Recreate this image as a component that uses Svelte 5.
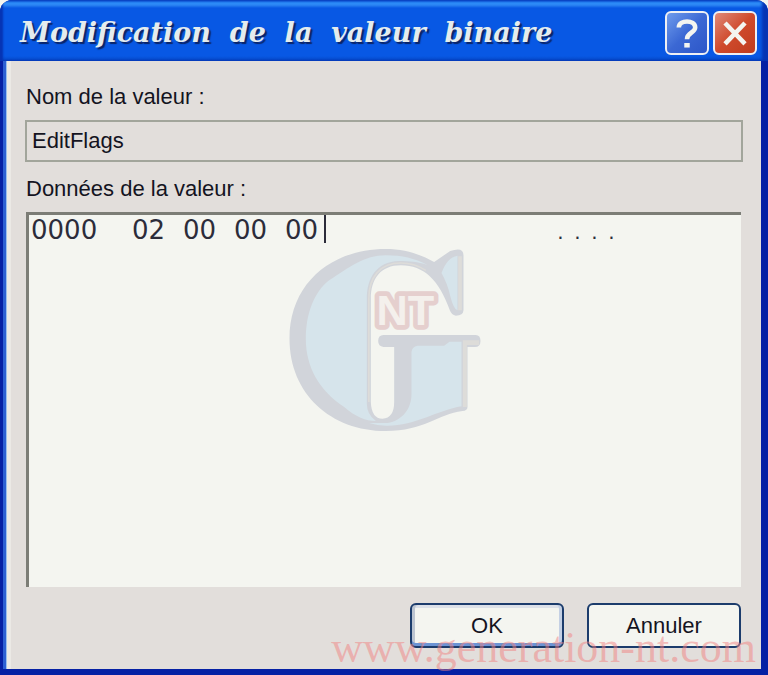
<script>
let name = 'EditFlags'
let offset = '0000'
let bytes = ['02', '00', '00', '00']

// caractères non imprimables affichés par un point
$: ascii = bytes.map(b => {
  const code = parseInt(b, 16)
  return code > 31 && code < 127 ? String.fromCharCode(code) : '.'
})
</script>

<div class="window">
  <header class="titlebar">
    <h1 class="title">Modification  de  la  valeur  binaire</h1>
    <button class="tool help" type="button" aria-label="Aide">
      <svg viewBox="0 0 44 44" width="40" height="40">
        <path d="M13 16 C13 7 31 7 31 16 C31 22 22 21 22 29" fill="none" stroke="#f4f5f0" stroke-width="5" />
        <rect x="19" y="33" width="6" height="5" fill="#f4f5f0" />
      </svg>
    </button>
    <button class="tool close" type="button" aria-label="Fermer">
      <svg viewBox="0 0 44 44" width="40" height="40">
        <path d="M11 11 L33 34 M33 11 L11 34" fill="none" stroke="#f4f5f0" stroke-width="5" />
      </svg>
    </button>
  </header>

  <form class="body" on:submit|preventDefault>
    <label class="label" for="value-name">Nom de la valeur :</label>
    <input class="name" id="value-name" type="text" value={name} readonly>

    <div class="label" id="data-label">Données de la valeur :</div>
    <div class="data" role="group" aria-labelledby="data-label">
      <svg class="logo" viewBox="50 50 585 560" aria-hidden="true">
        <path fill="#d1d4da" d="M56 325 C56 160 180 56 345 56 C400 56 445 70 490 95 L538 62 Q578 48 578 75 L578 240 Q577 256 555 256 Q542 254 537 240 C505 150 460 105 390 105 C330 105 300 145 300 205 L300 515 Q302 565 335 565 Q370 563 370 515 L370 350 L338 350 Q322 348 322 332 Q322 314 338 314 L615 314 Q629 314 629 332 Q629 350 612 350 L590 350 L590 530 Q590 541 575 542 C500 552 460 602 345 602 C180 602 56 490 56 325 Z" />
        <path fill="#d6e4eb" d="M105 325 C105 250 130 185 175 150 C235 112 280 75 345 75 C395 75 430 84 470 104 C440 94 415 92 385 92 C315 94 288 145 288 205 V520 Q288 552 315 572 C285 572 255 560 220 530 C145 480 105 410 105 325 Z" />
        <path fill="#d6e4eb" d="M560 76 V240 Q548 236 538 196 Q530 160 512 128 Q528 82 560 76 Z" />
        <path fill="#d6e4eb" d="M440 346 H520 L536 334 H572 V528 C500 540 430 588 345 586 Q320 586 295 578 L350 578 C395 570 422 535 422 490 V365 Q424 348 440 346 Z" />
        <path fill="#dddcd9" d="M562 78 H573 V240 H562 Z M576 330 H625 V344 H588 V530 H576 Z" />
        <path fill="none" stroke="#dddcd9" stroke-width="5" d="M294 515 V205 C294 140 328 98 390 98 Q430 98 465 120" />
        <text class="nt" x="317" y="285">NT</text>
      </svg>
      <div class="line">
        <span class="offset">{offset}</span>
        <span class="bytes">
          {#each bytes as byte, i}
            <input class="byte" type="text" maxlength="2" aria-label="Octet {i}" bind:value={byte}>
          {/each}
          <i class="caret"></i>
        </span>
        <span class="ascii">
          {#each ascii as char}
            <span class="char">{char}</span>
          {/each}
        </span>
      </div>
    </div>

    <div class="actions">
      <button class="btn default" type="submit">OK</button>
      <button class="btn" type="button">Annuler</button>
    </div>
  </form>

  <div class="watermark">www.generation-nt.com</div>
</div>

<style>
:global(body) {
  margin: 0;
  background: #f4f5f0;
}

.window {
  position: relative;
  display: flex;
  flex-direction: column;
  min-height: 100vh;
  box-sizing: border-box;
  overflow: hidden;
  border-radius: 12px 12px 0 0;
  background: #0520a4;
  font-family: "Liberation Sans", Arial, sans-serif;
  font-size: 22px;
  color: #14141f;
}

.titlebar {
  display: flex;
  align-items: center;
  gap: 4px;
  height: 61px;
  padding: 4px 11px 0 20px;
  box-sizing: border-box;
  background: linear-gradient(#0c50d4 0, #2c8cf8 3px, #2c86f4 5px, #0858e4 8px, #0858e4 56px, #0646c4 61px);
  box-shadow: inset 3px 0 2px #0634b4, inset -6px 0 3px #0634b4;
}

.title {
  flex: 1;
  margin: 0;
  font-family: "DejaVu Serif", serif;
  font-size: 27px;
  font-style: italic;
  font-weight: bold;
  line-height: 32px;
  white-space: pre;
  color: #e4ecee;
  text-shadow: 2px 2px 1px #0a2468;
}

.tool {
  width: 44px;
  height: 44px;
  padding: 0;
  border: 2px solid #eef0f4;
  border-radius: 6px;
}

.tool svg {
  display: block;
}

.help {
  background: linear-gradient(135deg, #6f9cec, #3b68d4 50%, #2c56c8);
}

.close {
  background: linear-gradient(135deg, #e08a78, #cf4a2c 50%, #bf3c1e);
}

.body {
  flex: 1;
  display: flex;
  flex-direction: column;
  margin: 0 7px 6px;
  padding: 22px 18px 21px;
  background: #e2dedb;
  box-shadow: -1px 0 0 #9cc0ec, -4px 0 0 #2c60d4, inset 4px 0 0 #ebe9e5;
}

.label {
  margin: 0 0 9px 1px;
  line-height: 28px;
}

.name {
  height: 42px;
  margin-bottom: 13px;
  padding: 0 5px;
  box-sizing: border-box;
  border: 2px solid #a2a59b;
  outline: none;
  background: #e2dedb;
  font: inherit;
  color: inherit;
}

.data {
  position: relative;
  flex: 1;
  min-height: 240px;
  margin: 0 2px 0 1px;
  border-top: 3px solid #7c7d76;
  border-left: 3px solid #7c7d76;
  background: #f4f5f0;
}

.logo {
  position: absolute;
  top: 32px;
  left: 50%;
  width: 195px;
  transform: translateX(-50%);
}

.nt {
  font-size: 130px;
  font-weight: bold;
  fill: #f4f0ec;
  stroke: #e5cfce;
  stroke-width: 28px;
  stroke-linejoin: round;
  paint-order: stroke;
}

.line {
  position: relative;
  display: flex;
  padding-left: 2px;
  font-family: "DejaVu Sans", sans-serif;
  font-size: 26px;
  line-height: 30px;
  color: #2c2c3a;
}

.offset {
  width: 101px;
}

.bytes {
  display: flex;
  gap: 17px;
  width: 420px;
}

.byte {
  width: 34px;
  height: 30px;
  padding: 0;
  border: 0;
  outline: none;
  background: none;
  font: inherit;
  color: inherit;
}

.caret {
  width: 2px;
  height: 28px;
  margin-left: -12px;
  background: #2c2c3a;
}

.ascii {
  display: flex;
}

.char {
  width: 17px;
  font-size: 20px;
  line-height: 34px;
  text-align: center;
}

.actions {
  display: flex;
  justify-content: flex-end;
  gap: 23px;
  margin: 16px 2px 0 0;
}

.btn {
  width: 154px;
  height: 45px;
  border: 2px solid #1c3c6c;
  border-radius: 6px;
  background: #f4f5f0;
  font: inherit;
  color: inherit;
}

.default {
  box-shadow: inset 0 -3px 0 #6c94d4, inset 3px 0 0 #bcc4d0, inset -3px 0 0 #c4d0e4, inset 0 3px 0 #dce0e8;
}

.watermark {
  position: absolute;
  right: 12px;
  bottom: 3px;
  font-family: "Liberation Serif", "Times New Roman", serif;
  font-size: 44px;
  line-height: 48px;
  color: rgba(240, 130, 130, 0.5);
  pointer-events: none;
}
</style>
